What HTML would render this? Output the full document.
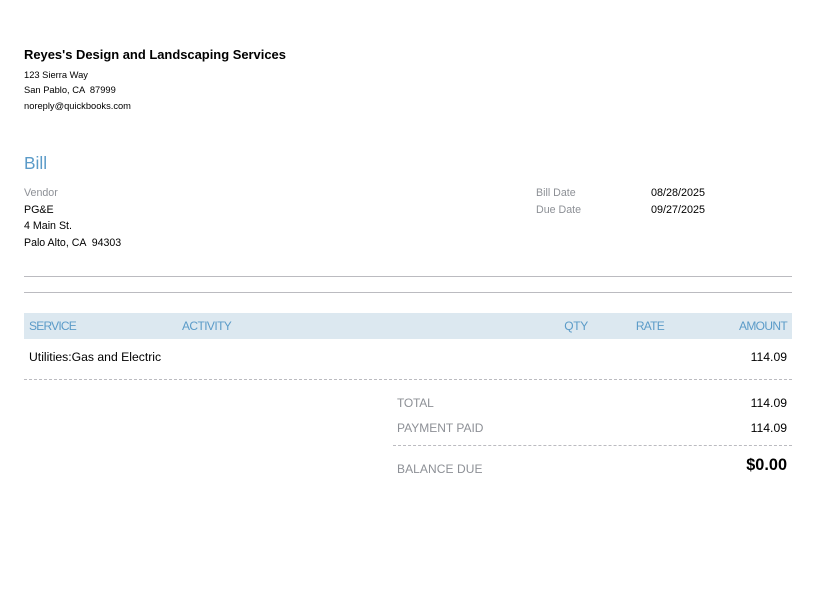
<!DOCTYPE html>
<html><head><meta charset="utf-8"><style>
html,body{margin:0;padding:0;background:#fff;width:816px;height:605px;overflow:hidden}
body{position:relative;font-family:"Liberation Sans",sans-serif;color:#000}
.t{position:absolute;white-space:pre;line-height:16px;height:16px;font-size:12px}
.r{text-align:right}
.g{color:#8d9096}
.b{color:#5b9bc8}
.n{font-size:12.2px}
.s{font-size:9.33px}
.l{position:absolute;left:24px;width:768px;height:1px;background:#bbbbc0}
.d{position:absolute;height:0;border-top:1px dashed #bbbbc0}
</style></head><body>
<div class="t" style="left:24px;top:47px;font-size:12.95px;font-weight:bold">Reyes's Design and Landscaping Services</div>
<div class="t s" style="left:24px;top:67px">123 Sierra Way</div>
<div class="t s" style="left:24px;top:82px">San Pablo, CA  87999</div>
<div class="t s" style="left:24px;top:98px">noreply@quickbooks.com</div>
<div class="t b" style="left:24px;top:155px;font-size:17.3px">Bill</div>
<div class="t g" style="left:24px;top:185px;font-size:10.67px">Vendor</div>
<div class="t" style="left:24px;top:202px;font-size:10.67px">PG&amp;E</div>
<div class="t" style="left:24px;top:218px;font-size:10.67px">4 Main St.</div>
<div class="t" style="left:24px;top:235px;font-size:10.6px">Palo Alto, CA  94303</div>
<div class="t g" style="left:536px;top:185px;font-size:10.67px">Bill Date</div>
<div class="t g" style="left:536px;top:202px;font-size:10.67px">Due Date</div>
<div class="t" style="left:651px;top:185px;font-size:10.8px">08/28/2025</div>
<div class="t" style="left:651px;top:202px;font-size:10.8px">09/27/2025</div>
<div class="l" style="top:276px"></div>
<div class="l" style="top:292px"></div>
<div style="position:absolute;left:24px;top:313px;width:768px;height:26px;background:#dce8f0"></div>
<div class="t b" style="left:29px;top:318px;letter-spacing:-.78px">SERVICE</div>
<div class="t b" style="left:182px;top:318px;letter-spacing:-.6px">ACTIVITY</div>
<div class="t b r" style="right:228px;top:318px;letter-spacing:-.3px">QTY</div>
<div class="t b r" style="right:152px;top:318px;letter-spacing:-.75px">RATE</div>
<div class="t b r" style="right:29px;top:318px;letter-spacing:-.67px">AMOUNT</div>
<div class="t n" style="left:29px;top:349px">Utilities:Gas and Electric</div>
<div class="t n r" style="right:29px;top:349px">114.09</div>
<div class="d" style="left:24px;top:379px;width:768px"></div>
<div class="t g" style="left:397px;top:395px;letter-spacing:-.2px">TOTAL</div>
<div class="t n r" style="right:29px;top:395px">114.09</div>
<div class="t g" style="left:397px;top:420px">PAYMENT PAID</div>
<div class="t n r" style="right:29px;top:420px">114.09</div>
<div class="d" style="left:393px;top:445px;width:399px"></div>
<div class="t g" style="left:397px;top:461px;letter-spacing:.08px">BALANCE DUE</div>
<div class="t r" style="right:29px;top:457px;font-size:16.3px;font-weight:bold">$0.00</div>
</body></html>
